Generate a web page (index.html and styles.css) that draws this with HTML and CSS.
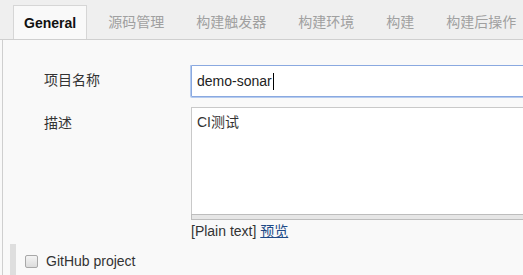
FILE: index.html
```html
<!DOCTYPE html>
<html lang="zh">
<head>
  <meta charset="UTF-8" />
  <title>demo-sonar 配置</title>
  <link rel="stylesheet" href="styles.css">
</head>
<body>
  <div class="tabs">
    <div class="tab active">General</div>
    <div class="tab">源码管理</div>
    <div class="tab">构建触发器</div>
    <div class="tab">构建环境</div>
    <div class="tab">构建</div>
    <div class="tab">构建后操作</div>
  </div>

  <div class="panel">
    <div class="form">
      <div class="label name-label">项目名称</div>
      <div class="input">demo-sonar<span class="caret"></span></div>

      <div class="label desc-label">描述</div>
      <div class="desc">
        <div class="textarea">CI测试</div>
        <div class="handle"></div>
        <div class="hint">[Plain text] <a href="#">预览</a></div>
      </div>
    </div>

    <div class="section">
      <label class="check"><span class="box"></span>GitHub project</label>
    </div>
  </div>
</body>
</html>
```

FILE: styles.css
```css
html, body { margin: 0; height: 100%; overflow: hidden; }
body {
  display: flex;
  flex-direction: column;
  font-family: "Liberation Sans", Arial, "Noto Sans CJK SC", sans-serif;
  font-size: 14px;
  color: #333;
  background: #f9f9f9;
}

.tabs {
  display: flex;
  gap: 10px;
  flex: none;
  height: 40px;
  padding-left: 13px;
  background: #efefef;
  border-bottom: 1px solid #cfcfcf;
  box-sizing: border-box;
  overflow: hidden;
}
.tab {
  margin-top: 6px;
  padding: 0 11px;
  line-height: 33px;
  color: #a0a0a0;
  white-space: nowrap;
}
.tab.active {
  font-weight: bold;
  color: #111;
  background: #f9f9f9;
  border: 1px solid #d6d6d6;
  border-bottom: none;
  margin-top: 5px;
  padding: 0 10px;
  line-height: 34px;
  height: 35px;
}

.panel {
  flex: 1;
  min-height: 0;
  overflow: hidden;
  margin-left: 2px;
  border-left: 1px solid #cfcfcf;
  padding-top: 25px;
}

.form {
  display: grid;
  grid-template-columns: 147px 400px;
  row-gap: 10px;
  padding-left: 41px;
  overflow: hidden;
}
.label { white-space: nowrap; }
.name-label { padding-top: 4px; }
.desc-label { padding-top: 5px; }

.input {
  height: 32px;
  box-sizing: border-box;
  border: 1px solid #8aa9e0;
  box-shadow: 0 0 0 1px #b5cbef;
  border-radius: 1px;
  background: #fff;
  padding: 6px 5px;
  line-height: 18px;
  color: #222;
}
.caret {
  display: inline-block;
  width: 1px;
  height: 17px;
  background: #000;
  vertical-align: -4px;
  margin-left: 1px;
}

.textarea {
  height: 107px;
  box-sizing: border-box;
  border: 1px solid #c9c9c9;
  border-bottom: none;
  background: #fff;
  padding: 6px 5px;
  line-height: 16px;
}
.handle {
  height: 6px;
  box-sizing: border-box;
  background: #e6e6e6;
  border: 1px solid #bdbdbd;
}
.hint {
  padding-top: 3px;
  line-height: 16px;
}
.hint a { color: #204a87; text-decoration: underline; }

.section {
  margin: 5px 0 0 7px;
  border-left: 6px solid #dedede;
  padding: 9px 0 0 9px;
  height: 60px;
}
.check {
  display: flex;
  align-items: center;
  gap: 8px;
}
.box {
  width: 11px;
  height: 11px;
  border: 1px solid #a8a8a8;
  border-radius: 2px;
  background: linear-gradient(#f4f4f4, #dcdcdc);
}
```
